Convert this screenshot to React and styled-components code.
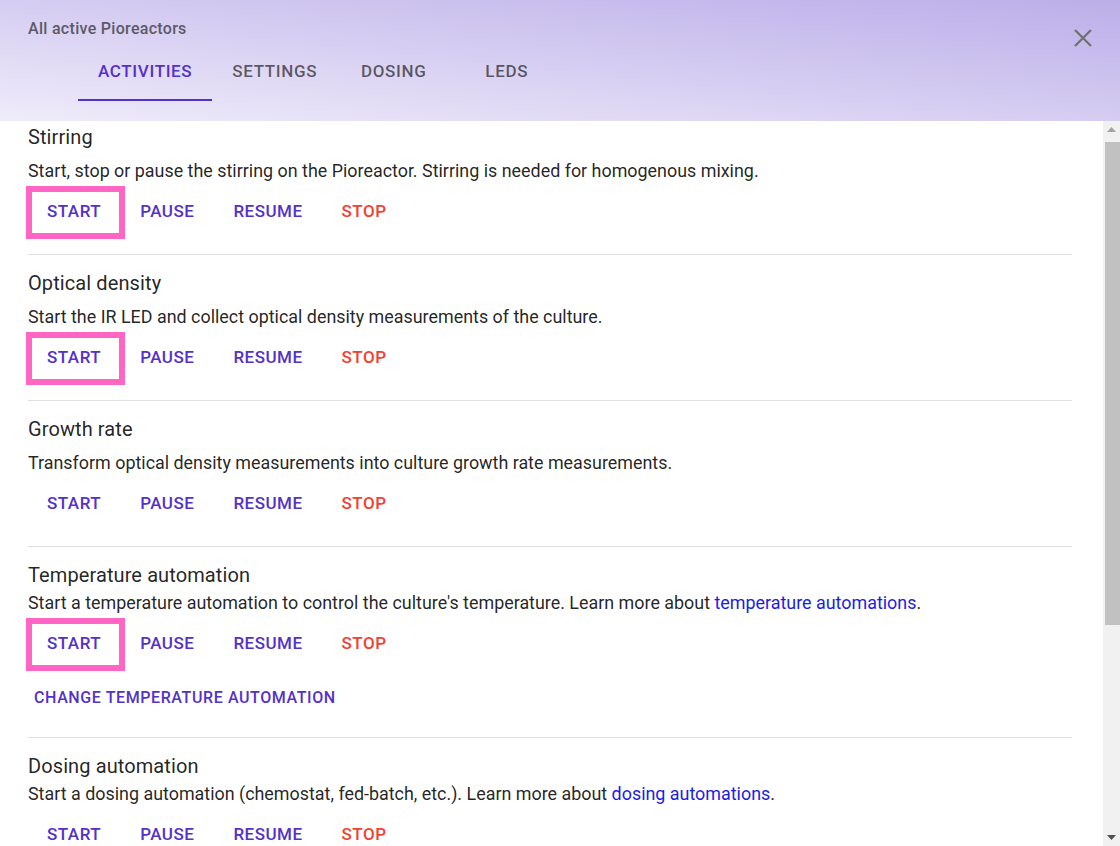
import React from 'react'
import styled, { createGlobalStyle } from 'styled-components'

const GlobalStyle = createGlobalStyle`
  html, body {
    margin: 0;
    padding: 0;
    height: 100%;
    background: #ffffff;
  }
  #root {
    height: 100%;
  }
  * {
    box-sizing: border-box;
  }
`

const activities = [
  {
    title: 'Stirring',
    desc: 'Start, stop or pause the stirring on the Pioreactor. Stirring is needed for homogenous mixing.',
    gutter: true,
    highlight: true,
  },
  {
    title: 'Optical density',
    desc: 'Start the IR LED and collect optical density measurements of the culture.',
    gutter: true,
    highlight: true,
  },
  {
    title: 'Growth rate',
    desc: 'Transform optical density measurements into culture growth rate measurements.',
    gutter: true,
    highlight: false,
  },
  {
    title: 'Temperature automation',
    desc: "Start a temperature automation to control the culture's temperature. Learn more about ",
    link: 'temperature automations',
    change: 'Change temperature automation',
    highlight: true,
  },
  {
    title: 'Dosing automation',
    desc: 'Start a dosing automation (chemostat, fed-batch, etc.). Learn more about ',
    link: 'dosing automations',
    change: 'Change dosing automation',
    highlight: false,
  },
  {
    title: 'LED automation',
    desc: 'Start an LED automation to control the light on the culture. Learn more about ',
    link: 'LED automations',
    change: 'Change LED automation',
    highlight: false,
  },
]

const tabs = ['Activities', 'Settings', 'Dosing', 'LEDs']

const ScrollBar = () => (
  <Track>
    <ArrowButton>
      <svg width="9" height="5" viewBox="0 0 9 5">
        <path d="M0 5 L4.5 0 L9 5z" fill="#a3a3a3" />
      </svg>
    </ArrowButton>
    <Thumb />
    <ArrowButton>
      <svg width="9" height="5" viewBox="0 0 9 5">
        <path d="M0 0 L4.5 5 L9 0z" fill="#505050" />
      </svg>
    </ArrowButton>
  </Track>
)

const App = () => {
  return (
    <>
      <GlobalStyle />
      <Dialog>
        <Header>
          <DialogTitle>All active Pioreactors</DialogTitle>
          <CloseButton aria-label="close">
            <svg width="20" height="20" viewBox="0 0 20 20">
              <path d="M2 2 L18 18 M18 2 L2 18" stroke="#707070" strokeWidth="2.2" fill="none" />
            </svg>
          </CloseButton>
          <TabBar>
            {tabs.map((t, i) => (
              <Tab key={t} $active={i === 0}>{t}</Tab>
            ))}
          </TabBar>
        </Header>
        <Body>
          <Content>
            {activities.map((a) => (
              <Section key={a.title}>
                <Title $gutter={a.gutter}>{a.title}</Title>
                <Desc>
                  {a.desc}
                  {a.link && (
                    <>
                      <DocLink href="#">{a.link}</DocLink>.
                    </>
                  )}
                </Desc>
                <ButtonRow>
                  <ActionButton $highlight={a.highlight}>Start</ActionButton>
                  <ActionButton>Pause</ActionButton>
                  <ActionButton>Resume</ActionButton>
                  <ActionButton $danger>Stop</ActionButton>
                </ButtonRow>
                {a.change && <ChangeButton>{a.change}</ChangeButton>}
              </Section>
            ))}
          </Content>
          <ScrollBar />
        </Body>
      </Dialog>
    </>
  )
}

export default App

const Dialog = styled.div`
  height: 100vh;
  display: flex;
  flex-direction: column;
  font-family: Roboto, "Liberation Sans", sans-serif;
  color: rgba(0, 0, 0, 0.87);
`

const Header = styled.div`
  position: relative;
  flex: 0 0 121px;
  height: 121px;
  padding: 18px 28px 20px;
  display: flex;
  flex-direction: column;
  background: linear-gradient(to top right, #efecfa, #bbaee9);
`

const DialogTitle = styled.div`
  font-size: 16px;
  font-weight: 500;
  letter-spacing: 0.3px;
  line-height: 22px;
  color: #5d5a68;
`

const CloseButton = styled.button`
  position: absolute;
  top: 28px;
  right: 27px;
  width: 20px;
  height: 20px;
  padding: 0;
  border: none;
  background: none;
  cursor: pointer;
  display: flex;
`

const TabBar = styled.div`
  display: flex;
  margin-left: 50px;
  height: 61px;
`

const Tab = styled.div`
  min-width: 113px;
  padding: 3px 20px 0;
  display: flex;
  align-items: center;
  justify-content: center;
  font-size: 17px;
  font-weight: 500;
  letter-spacing: 0.65px;
  text-transform: uppercase;
  color: ${(p) => (p.$active ? '#5331ca' : 'rgba(0, 0, 0, 0.6)')};
  border-bottom: 2px solid ${(p) => (p.$active ? '#5331ca' : 'transparent')};
`

const Body = styled.div`
  flex: 1;
  min-height: 0;
  display: flex;
`

const Content = styled.div`
  flex: 1;
  overflow-y: auto;
  scrollbar-width: none;
  padding: 0 31px 40px 28px;
`

const Track = styled.div`
  flex: 0 0 17px;
  display: flex;
  flex-direction: column;
  background: #f1f1f1;
`

const ArrowButton = styled.div`
  height: 17px;
  display: flex;
  align-items: center;
  justify-content: center;

  &:last-child {
    margin-top: auto;
  }
`

const Thumb = styled.div`
  height: 483px;
  margin: 4px 0 0 2px;
  background: #c1c1c1;
`

const Section = styled.div`
  padding: 12px 0 25px;
  border-bottom: 1px solid #e0e0e0;

  &:first-child {
    padding-top: 0;
  }

  &:last-child {
    border-bottom: none;
  }
`

const Title = styled.div`
  font-size: 20px;
  font-weight: 400;
  letter-spacing: 0.1px;
  line-height: 32px;
  margin-bottom: ${(p) => (p.$gutter ? '6px' : '0')};
`

const Desc = styled.p`
  margin: 0;
  font-size: 17.9px;
  line-height: 24px;
`

const DocLink = styled.a`
  color: #1c1ce6;
  text-decoration: none;
`

const ButtonRow = styled.div`
  display: flex;
  gap: 23px;
  margin-top: 10px;
  padding-left: 11px;
`

const ActionButton = styled.button`
  position: relative;
  height: 36px;
  padding: 6px 8px;
  border: none;
  background: none;
  font-family: Roboto, "Liberation Sans", sans-serif;
  font-size: 17px;
  font-weight: 500;
  letter-spacing: 0.5px;
  text-transform: uppercase;
  color: ${(p) => (p.$danger ? '#f3402f' : '#5331ca')};
  cursor: pointer;

  ${(p) =>
    p.$highlight &&
    `
    &::after {
      content: '';
      position: absolute;
      left: -13px;
      right: -16px;
      top: -7px;
      bottom: -10px;
      border: 6px solid #ff66c4;
      pointer-events: none;
    }
  `}
`

const ChangeButton = styled.button`
  display: block;
  height: 30px;
  margin-top: 21px;
  padding: 4px 6px;
  border: none;
  background: none;
  font-family: Roboto, "Liberation Sans", sans-serif;
  font-size: 16px;
  font-weight: 500;
  letter-spacing: 0.6px;
  text-transform: uppercase;
  color: #5331ca;
  cursor: pointer;
`
